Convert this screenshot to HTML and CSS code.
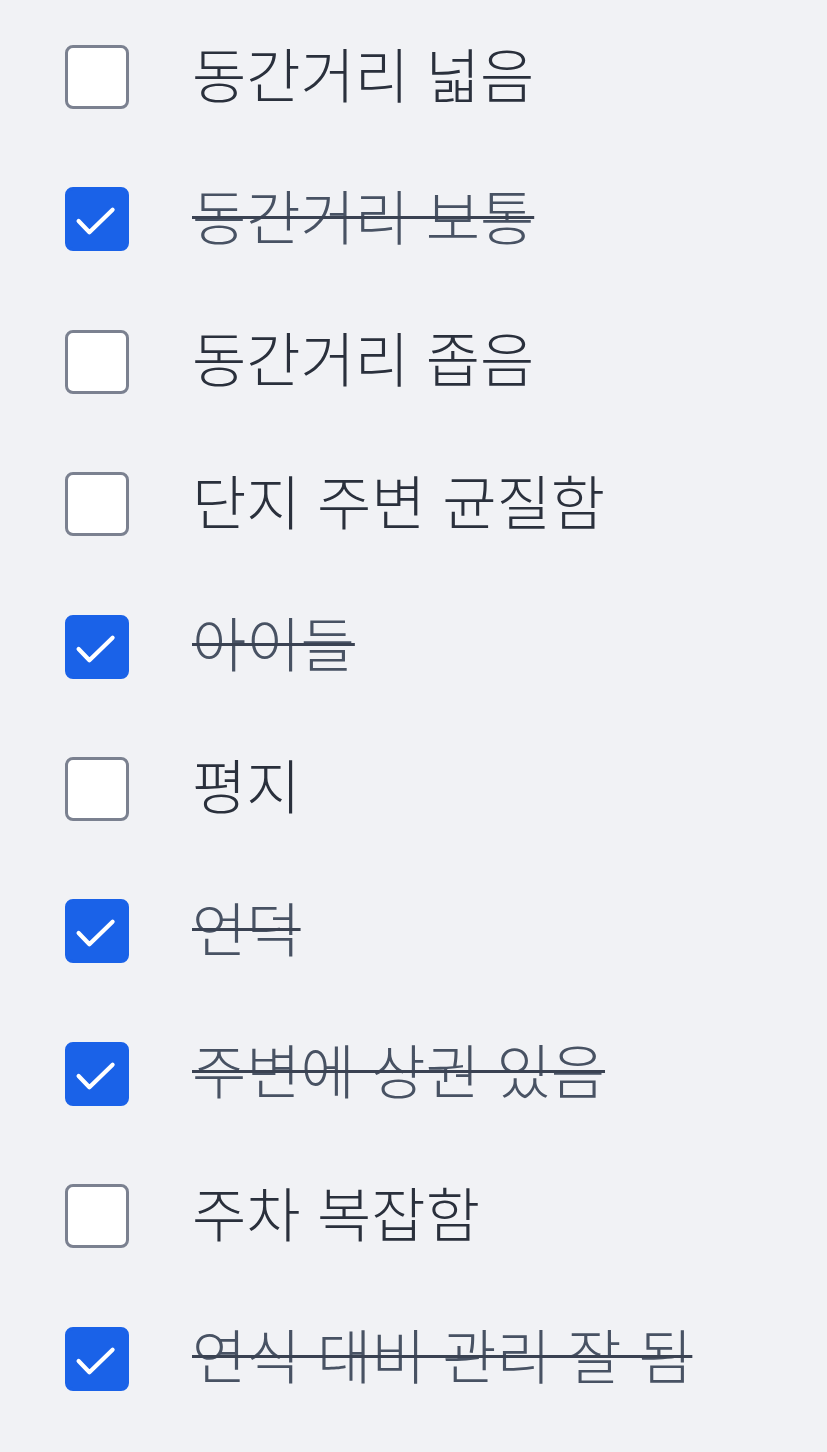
FILE: index.html
```html
<!DOCTYPE html>
<html lang="ko">
<head>
<meta charset="utf-8">
<link rel="stylesheet" href="styles.css">
</head>
<body>
<ul class="list">
  <li class="item"><span class="box"></span><span class="label">동간거리 넓음</span></li>
  <li class="item done"><span class="box"><svg viewBox="0 0 16 16"><path d="M3.4 8.5 L6.1 11.3 L11.9 5.7"/></svg></span><span class="label">동간거리 보통</span></li>
  <li class="item"><span class="box"></span><span class="label">동간거리 좁음</span></li>
  <li class="item"><span class="box"></span><span class="label">단지 주변 균질함</span></li>
  <li class="item done"><span class="box"><svg viewBox="0 0 16 16"><path d="M3.4 8.5 L6.1 11.3 L11.9 5.7"/></svg></span><span class="label">아이들</span></li>
  <li class="item"><span class="box"></span><span class="label">평지</span></li>
  <li class="item done"><span class="box"><svg viewBox="0 0 16 16"><path d="M3.4 8.5 L6.1 11.3 L11.9 5.7"/></svg></span><span class="label">언덕</span></li>
  <li class="item done"><span class="box"><svg viewBox="0 0 16 16"><path d="M3.4 8.5 L6.1 11.3 L11.9 5.7"/></svg></span><span class="label">주변에 상권 있음</span></li>
  <li class="item"><span class="box"></span><span class="label">주차 복잡함</span></li>
  <li class="item done"><span class="box"><svg viewBox="0 0 16 16"><path d="M3.4 8.5 L6.1 11.3 L11.9 5.7"/></svg></span><span class="label">연식 대비 관리 잘 됨</span></li>
</ul>
</body>
</html>
```

FILE: styles.css
```css
html, body {
  margin: 0;
  padding: 0;
  background: #f1f2f5;
}
body {
  font-family: "Noto Sans CJK KR", "Noto Sans", sans-serif;
  width: 827px;
  height: 1452px;
  overflow: hidden;
}
.list {
  list-style: none;
  margin: 0;
  padding: 45px 0 0 65px;
  display: flex;
  flex-direction: column;
  gap: 78.4px;
}
.item {
  display: flex;
  align-items: center;
  gap: 63px;
  height: 64px;
}
.box {
  box-sizing: border-box;
  width: 64px;
  height: 64px;
  flex: none;
  border: 3px solid #7b8190;
  border-radius: 8px;
  background: #ffffff;
  display: flex;
  align-items: center;
  justify-content: center;
}
.done .box {
  background: #1a62e8;
  border-color: #1a62e8;
}
.box svg {
  width: 64px;
  height: 64px;
  flex: none;
}
.box svg path {
  fill: none;
  stroke: #ffffff;
  stroke-width: 1.05;
  stroke-linecap: round;
  stroke-linejoin: round;
}
.label {
  font-size: 59px;
  font-weight: 300;
  line-height: 1;
  color: #2a303c;
  white-space: nowrap;
  position: relative;
  top: -5px;
}
.done .label {
  color: #485263;
  text-decoration: line-through;
  text-decoration-thickness: 3px;
  text-decoration-color: #3a4252;
}
```
